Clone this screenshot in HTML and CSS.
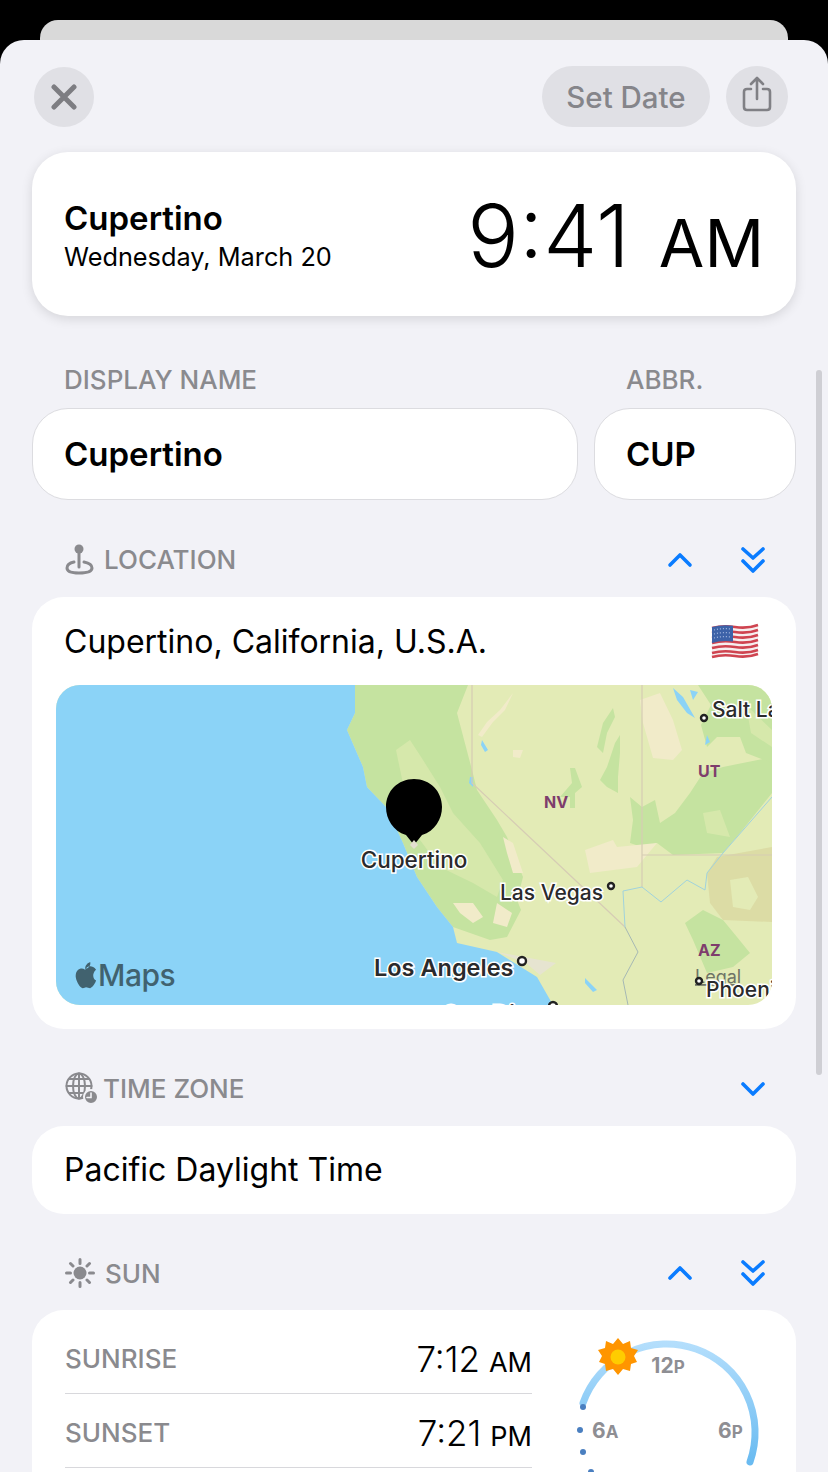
FILE: index.html
```html
<!DOCTYPE html>
<html lang="en">
<head>
    <meta charset="UTF-8">
    <meta name="viewport" content="width=device-width, initial-scale=1.0">
    <title>Cupertino</title>
    <link rel="stylesheet" href="styles.css">
</head>
<body>
    <div class="back-sheet"></div>
    <div class="sheet">
        <div class="scrollbar"></div>

        <div class="toolbar">
            <button class="round-button">
                <svg width="26" height="26" viewBox="0 0 26 26"><path d="M3 3 L23 23 M23 3 L3 23" class="x-stroke"/></svg>
            </button>
            <div class="toolbar-right">
                <button class="pill-button">Set Date</button>
                <button class="round-button share">
                    <svg width="30" height="36" viewBox="0 0 30 36" class="share-icon">
                        <path d="M9 13 H5 Q2 13 2 16 V31 Q2 34 5 34 H25 Q28 34 28 31 V16 Q28 13 25 13 H21"/>
                        <path d="M15 23 V3 M9 8 L15 2 L21 8"/>
                    </svg>
                </button>
            </div>
        </div>

        <div class="hero card">
            <div class="hero-place">
                <div class="hero-name">Cupertino</div>
                <div class="hero-date">Wednesday, March 20</div>
            </div>
            <div class="hero-time">9:41<span class="hero-ampm">AM</span></div>
        </div>

        <div class="fields">
            <div>
                <div class="field-label">DISPLAY NAME</div>
                <div class="field">Cupertino</div>
            </div>
            <div>
                <div class="field-label">ABBR.</div>
                <div class="field">CUP</div>
            </div>
        </div>

        <div class="section-head location-head">
            <div class="section-title">
                <svg width="30" height="32" viewBox="0 0 30 32" class="head-icon">
                    <circle cx="14" cy="6" r="4.5" class="solid"/>
                    <path d="M14 9 V24"/>
                    <path d="M9 19 C4 20 2 22 2 25 C2 29 8 30 14 30 C20 30 27 29 27 25 C27 22 24 20 19 19"/>
                </svg>
                LOCATION
            </div>
            <div class="section-actions">
                <svg width="26" height="16" viewBox="0 0 26 16" class="chevron"><path d="M3 13 L13 3 L23 13"/></svg>
                <svg width="26" height="28" viewBox="0 0 26 28" class="chevron"><path d="M3 3 L13 12 L23 3 M3 15 L13 25 L23 15"/></svg>
            </div>
        </div>
        <div class="card location-card">
            <div class="location-row">
                <span>Cupertino, California, U.S.A.</span>
                <svg width="48" height="36" viewBox="0 0 48 36" class="flag">
                    <path d="M1 4 Q12 1 24 3 T47 1 V31 Q36 34 24 33 T1 34 Z" fill="#f6efef"/>
                    <path d="M1 5 Q12 2 24 4 T47 2 M1 10 Q12 7 24 9 T47 7 M1 15 Q12 12 24 14 T47 12 M1 20 Q12 17 24 19 T47 17 M1 25 Q12 22 24 24 T47 22 M1 30 Q12 27 24 29 T47 27 M1 34 Q12 31 24 33 T47 31" class="flag-red"/>
                    <path d="M1 4 Q11 1.5 22 2.8 V18.5 Q11 17 1 20 Z" fill="#3d62a8"/>
                    <path d="M3 7 Q11 5 20 6 M3 11 Q11 9 20 10 M3 15 Q11 13 20 14" class="flag-stars"/>
                </svg>
            </div>
            <svg class="map" width="716" height="320" viewBox="0 0 716 320">
                <rect width="716" height="320" fill="#e3ebb6"/>
                <!-- california -->
                <path d="M299 0 L299 28 L291 45 L307 82 L311 102 L331 123 L347 158 L361 192 L381 222 L397 242 L434 255 L451 252 L465 225 L461 215 L467 192 L451 152 L441 135 L421 105 L416 85 L401 28 L412 0 Z" fill="#c5e3a0"/>
                <path d="M340 65 L354 55 L367 75 L384 102 L397 128 L424 158 L447 195 L441 212 L417 198 L384 182 L364 155 L351 118 Z" fill="#d6e8ab"/>
                <path d="M397 218 L417 218 L427 232 L417 238 L404 228 Z M441 218 L456 228 L451 242 L437 238 Z M447 152 L457 158 L467 188 L457 188 L451 168 Z" fill="#f1ebc9"/>
                <!-- nevada -->
                <path d="M422 50 L431 37 L444 25 L457 8 L449 25 L437 37 L426 52 Z M457 65 L467 65 L464 73 L457 72 Z" fill="#f1ebc9"/>
                <path d="M514 83 L519 83 L526 102 L519 108 L519 123 L514 123 L514 112 L504 112 L516 98 Z M557 23 L547 38 L541 62 L547 68 L551 48 L559 32 Z M564 50 L559 58 L551 82 L544 95 L551 102 L562 108 L562 92 L564 68 Z" fill="#c5e3a0"/>
                <!-- utah -->
                <path d="M574 158 L577 135 L574 112 L586 122 L599 115 L604 138 L619 128 L634 108 L647 88 L667 82 L716 72 L716 108 L684 148 L667 168 L617 170 L601 158 L586 162 Z" fill="#c5e3a0"/>
                <path d="M642 0 L716 0 L716 78 L690 68 L684 52 L661 52 L651 62 L645 40 L655 20 Z" fill="#c5e3a0"/>
                <path d="M647 128 L664 125 L674 152 L651 148 Z M690 20 L716 45 L716 62 L695 48 Z" fill="#d6e8ab"/>
                <path d="M584 15 L604 8 L617 35 L626 65 L617 75 L597 73 L587 38 Z M529 165 L557 155 L561 162 L601 158 L581 182 L534 188 Z" fill="#f1ebc9"/>
                <!-- arizona -->
                <path d="M629 238 L647 225 L667 235 L681 252 L694 268 L677 282 L651 288 L637 255 Z" fill="#c5e3a0"/>
                <path d="M651 188 L661 172 L716 162 L716 237 L667 235 L654 218 Z" fill="#dcdca5"/>
                <path d="M674 195 L692 192 L702 212 L694 225 L677 222 Z" fill="#e3ebb6"/>
                <!-- ocean and water -->
                <path d="M299 0 L299 28 L291 45 L307 82 L311 102 L331 123 L347 158 L361 192 L381 222 L397 242 L401 258 L441 267 L481 292 L497 320 L0 320 L0 0 Z" fill="#8bd3f7"/>
                <path d="M441 267 L500 278 L484 290 L470 278 Z" fill="#e6e4d0"/>
                <path d="M617 3 L627 12 L639 33 L631 28 L621 15 Z M634 5 L642 7 L637 15 Z M651 50 L654 57 L649 60 Z M414 92 L417 92 L417 102 L413 98 Z M426 55 L432 65 L429 67 L425 60 Z M529 293 L541 305 L537 307 L529 298 Z" fill="#8bd3f7"/>
                <path d="M416 0 V98 L569 242 M586 0 V202 M586 170 H716" class="state-line"/>
                <path d="M569 242 L567 206 L586 202 L605 217 L631 195 L649 205 L651 188 L667 168 L716 112" class="river"/>
                <path d="M569 242 L582 267 L567 295 L572 320" class="river grey"/>

                <circle cx="648" cy="33" r="3" class="city-dot"/>
                <text x="656" y="32" class="map-label">Salt Lake City</text>
                <text x="488" y="123" class="state-label">NV</text>
                <text x="642" y="92" class="state-label">UT</text>
                <text x="642" y="271" class="state-label">AZ</text>
                <circle cx="555" cy="201" r="3" class="city-dot"/>
                <text x="444" y="215" class="map-label">Las Vegas</text>
                <circle cx="466" cy="276" r="4" class="city-dot"/>
                <text x="318" y="291" class="map-label big">Los Angeles</text>
                <text x="387" y="337" class="map-label big">San Diego</text>
                <circle cx="497" cy="321" r="4" class="city-dot"/>
                <text x="639" y="298" class="legal">Legal</text>
                <circle cx="643" cy="296" r="3" class="city-dot"/>
                <text x="650" y="312" class="map-label">Phoenix</text>

                <path d="M358 160 L350 150 C337 146 330 134 330 122 C330 106 342 94 358 94 C374 94 386 106 386 122 C386 134 379 146 366 150 Z" fill="#000"/>
                <path d="M354 160 L358 155 L362 160 L358 164 Z" fill="#e3e0d0"/>
                <text x="358" y="183" class="map-label pin-label">Cupertino</text>

                <path transform="translate(9 52) scale(.84)" d="M30 273 C27 273 25 275 24 277 C22 276 20 275 18 276 C14 277 12 282 13 287 C14 292 18 299 21 299 C23 299 24 298 25 298 C27 298 28 299 30 299 C33 298 36 293 37 290 C33 288 32 281 37 277 C35 274 32 273 30 273 Z M24 276 C24 272 27 269 30 268 C31 272 28 276 24 276 Z" fill="#41626f"/>
                <text x="42" y="301" class="maps-word">Maps</text>
            </svg>
        </div>

        <div class="section-head zone-head">
            <div class="section-title">
                <svg width="34" height="32" viewBox="0 0 34 32" class="head-icon thin">
                    <circle cx="14" cy="14" r="12.5"/>
                    <ellipse cx="14" cy="14" rx="6" ry="12.5"/>
                    <path d="M14 1.5 V26.5 M1.5 14 H26.5 M4 7 H24 M4 21 H24"/>
                    <circle cx="26" cy="25" r="7" class="solid ring"/>
                    <path d="M26 21 V25.5 H22" class="clock-hands"/>
                </svg>
                TIME ZONE
            </div>
            <div class="section-actions">
                <svg width="26" height="16" viewBox="0 0 26 16" class="chevron"><path d="M3 3 L13 13 L23 3"/></svg>
            </div>
        </div>
        <div class="card zone-card">Pacific Daylight Time</div>

        <div class="section-head sun-head">
            <div class="section-title">
                <svg width="30" height="30" viewBox="0 0 30 30" class="head-icon rays">
                    <circle cx="15" cy="15" r="6.5" class="solid"/>
                    <path d="M15 1.5 V5.5 M15 24.5 V28.5 M1.5 15 H5.5 M24.5 15 H28.5 M5.5 5.5 L8 8 M22 22 L24.5 24.5 M24.5 5.5 L22 8 M8 22 L5.5 24.5"/>
                </svg>
                SUN
            </div>
            <div class="section-actions">
                <svg width="26" height="16" viewBox="0 0 26 16" class="chevron"><path d="M3 13 L13 3 L23 13"/></svg>
                <svg width="26" height="28" viewBox="0 0 26 28" class="chevron"><path d="M3 3 L13 12 L23 3 M3 15 L13 25 L23 15"/></svg>
            </div>
        </div>
        <div class="card sun-card">
            <div class="sun-rows">
                <div class="sun-row">
                    <span class="sun-label">SUNRISE</span>
                    <span class="sun-time">7:12<span class="sun-ampm">AM</span></span>
                </div>
                <div class="sun-row">
                    <span class="sun-label">SUNSET</span>
                    <span class="sun-time">7:21<span class="sun-ampm">PM</span></span>
                </div>
            </div>
            <svg class="dial" width="200" height="190" viewBox="0 0 200 190">
                <defs>
                    <linearGradient id="arc-fill" x1="0" y1="0" x2="0" y2="1">
                        <stop offset="0" stop-color="#b3defc"/>
                        <stop offset="1" stop-color="#6abbf1"/>
                    </linearGradient>
                </defs>
                <path d="M13 76 A88.5 88.5 0 1 1 180 135" class="dial-arc"/>
                <circle cx="13" cy="80" r="3" class="dial-dot"/>
                <circle cx="10" cy="103" r="3" class="dial-dot"/>
                <circle cx="13" cy="125" r="3" class="dial-dot"/>
                <circle cx="21" cy="145" r="3" class="dial-dot"/>
                <g transform="translate(-1 3)">
                    <path d="M49 8 L54 14 L61 11 L62 18 L69 20 L65 26 L68 32 L62 34 L61 41 L54 39 L49 45 L44 39 L37 41 L36 34 L30 32 L33 26 L29 20 L36 18 L37 11 L44 14 Z" fill="#ff9500"/>
                    <circle cx="49" cy="27" r="7.5" fill="#ffcc00"/>
                </g>
                <text x="98" y="46" text-anchor="middle" class="dial-text">12<tspan class="dial-small">P</tspan></text>
                <text x="22" y="111" class="dial-text">6<tspan class="dial-small">A</tspan></text>
                <text x="148" y="111" class="dial-text">6<tspan class="dial-small">P</tspan></text>
            </svg>
        </div>
    </div>
</body>
</html>
```

FILE: styles.css
```css
html, body {
    margin: 0;
    padding: 0;
    background-color: #000;
}
body {
    height: 1452px;
    padding-top: 20px;
    overflow: hidden;
    font-family: Inter, "Liberation Sans", sans-serif;
    color: #000;
}
.back-sheet {
    height: 20px;
    margin: 0 40px;
    background-color: #d9d9d9;
    border-radius: 18px 18px 0 0;
}
.sheet {
    position: relative;
    height: 1432px;
    padding: 26px 32px 0;
    box-sizing: border-box;
    background-color: #f2f2f7;
    border-radius: 24px 24px 0 0;
    overflow: hidden;
}
.scrollbar {
    position: absolute;
    top: 330px;
    right: 6px;
    width: 6px;
    height: 705px;
    background-color: #cfcfd4;
    border-radius: 3px;
}

/* toolbar */
.toolbar {
    display: flex;
    justify-content: space-between;
    align-items: center;
    height: 61px;
    padding: 0 8px 0 2px;
}
.toolbar-right {
    display: flex;
    align-items: center;
    gap: 16px;
}
.round-button {
    display: flex;
    justify-content: center;
    align-items: center;
    width: 60px;
    height: 60px;
    padding: 0;
    border: none;
    border-radius: 50%;
    background-color: #e0e0e5;
}
.round-button.share {
    width: 62px;
    height: 61px;
}
.x-stroke {
    fill: none;
    stroke: #7d7d82;
    stroke-width: 5;
    stroke-linecap: round;
}
.share-icon {
    margin-bottom: 6px;
}
.share-icon path {
    fill: none;
    stroke: #808085;
    stroke-width: 2.6;
    stroke-linecap: round;
    stroke-linejoin: round;
}
.pill-button {
    width: 168px;
    height: 61px;
    padding: 0;
    border: none;
    border-radius: 31px;
    background-color: #e0e0e5;
    color: #85858a;
    font-family: inherit;
    font-size: 29.5px;
    font-weight: 500;
}

/* cards */
.card {
    background-color: #fff;
    border-radius: 32px;
}
.hero {
    display: flex;
    justify-content: space-between;
    align-items: center;
    height: 164px;
    margin-top: 25px;
    padding: 0 32px;
    border-radius: 36px;
    box-shadow: 0 3px 12px rgba(0, 0, 0, 0.12);
}
.hero-place {
    margin-top: 3px;
}
.hero-name {
    font-size: 33px;
    font-weight: 600;
    line-height: 38px;
}
.hero-date {
    margin-top: 4px;
    font-size: 25.3px;
    line-height: 32px;
}
.hero-time {
    margin-top: 10px;
    font-size: 86px;
    font-weight: 300;
    line-height: 100px;
}
.hero-ampm {
    margin-left: 29px;
    font-size: 66px;
    font-weight: 400;
}

/* name fields */
.fields {
    display: grid;
    grid-template-columns: 546px 202px;
    gap: 16px;
    margin-top: 46px;
}
.field-label {
    padding-left: 32px;
    color: #8a8a8e;
    font-size: 26px;
    font-weight: 500;
    line-height: 36px;
}
.field {
    height: 92px;
    margin-top: 10px;
    padding-left: 31px;
    box-sizing: border-box;
    background-color: #fff;
    border: 1px solid #dcdce0;
    border-radius: 36px;
    font-size: 33px;
    font-weight: 600;
    line-height: 90px;
}

/* section headers */
.section-head {
    display: flex;
    justify-content: space-between;
    align-items: center;
    height: 40px;
    padding: 0 30px 0 33px;
}
.location-head { margin-top: 40px; }
.zone-head { margin-top: 40px; }
.sun-head { margin-top: 39px; }
.location-head .section-title,
.zone-head .section-title {
    margin-bottom: 2px;
}
.section-title {
    display: flex;
    align-items: center;
    gap: 9px;
    color: #8a8a8e;
    font-size: 26px;
    font-weight: 500;
}
.section-actions {
    display: flex;
    align-items: center;
    gap: 47px;
}
.head-icon {
    fill: none;
    stroke: #8a8a8e;
    stroke-width: 3;
    stroke-linecap: round;
}
.head-icon.thin { stroke-width: 2; margin-right: -5px; }
.head-icon.rays { margin-right: 1px; }
.head-icon .solid { fill: #8a8a8e; stroke: none; }
.head-icon .ring { stroke: #f2f2f7; stroke-width: 2; }
.head-icon .clock-hands { stroke: #f2f2f7; stroke-width: 1.6; }
.chevron {
    fill: none;
    stroke: #0a7cff;
    stroke-width: 3.6;
    stroke-linecap: round;
    stroke-linejoin: round;
}

/* location */
.location-card {
    height: 432px;
    margin-top: 17px;
    padding: 24px 24px 0;
    box-sizing: border-box;
}
.location-row {
    display: flex;
    justify-content: space-between;
    align-items: center;
    height: 40px;
    padding: 0 13px 0 8px;
    font-size: 32px;
}
.flag-red {
    fill: none;
    stroke: #cf4450;
    stroke-width: 2.6;
}
.flag-stars {
    fill: none;
    stroke: #a9bbe2;
    stroke-width: 1.2;
    stroke-dasharray: 1 2;
}
.map {
    display: block;
    margin-top: 24px;
    border-radius: 24px;
    font-family: Inter, "Liberation Sans", sans-serif;
}
.state-line {
    fill: none;
    stroke: #d6ccb4;
    stroke-width: 1.2;
}
.river {
    fill: none;
    stroke: #a0d2dc;
    stroke-width: 1;
}
.river.grey { stroke: #a6b8b4; }
.city-dot {
    fill: #fff;
    stroke: #222;
    stroke-width: 2.4;
}
.map-label {
    fill: #2a2a2c;
    stroke: #fff;
    stroke-width: 3px;
    paint-order: stroke;
    font-size: 21px;
    font-weight: 500;
}
.map-label.big {
    font-size: 23.5px;
    font-weight: 600;
}
.pin-label {
    font-size: 22.5px;
    text-anchor: middle;
}
.state-label {
    fill: #7e3d6c;
    font-size: 16px;
    font-weight: 700;
}
.legal {
    fill: #6f7466;
    font-size: 18px;
    text-decoration: underline;
}
.maps-word {
    fill: #41626f;
    font-size: 30px;
    font-weight: 500;
    letter-spacing: -0.5px;
}

/* time zone */
.zone-card {
    height: 88px;
    margin-top: 17px;
    padding-left: 32px;
    font-size: 32px;
    line-height: 88px;
}

/* sun */
.sun-card {
    display: flex;
    height: 300px;
    margin-top: 17px;
    padding: 10px 0 0 33px;
    box-sizing: border-box;
}
.sun-rows {
    width: 467px;
}
.sun-row {
    display: flex;
    justify-content: space-between;
    align-items: center;
    height: 74px;
    padding-top: 4px;
    box-sizing: border-box;
    border-bottom: 1px solid #d8d8dc;
}
.sun-label {
    color: #8a8a8e;
    font-size: 26px;
    font-weight: 500;
}
.sun-time {
    font-size: 35px;
    font-weight: 300;
}
.sun-ampm {
    margin-left: 9px;
    font-size: 27px;
    font-weight: 400;
}
.dial {
    flex: none;
    margin: 7px 0 0 38px;
}
.dial-arc {
    fill: none;
    stroke: url(#arc-fill);
    stroke-width: 7;
    stroke-linecap: round;
}
.dial-dot { fill: #4a7fc0; }
.dial-text {
    fill: #8e8e93;
    font-size: 21px;
    font-weight: 700;
}
.dial-small { font-size: 17px; }
```
